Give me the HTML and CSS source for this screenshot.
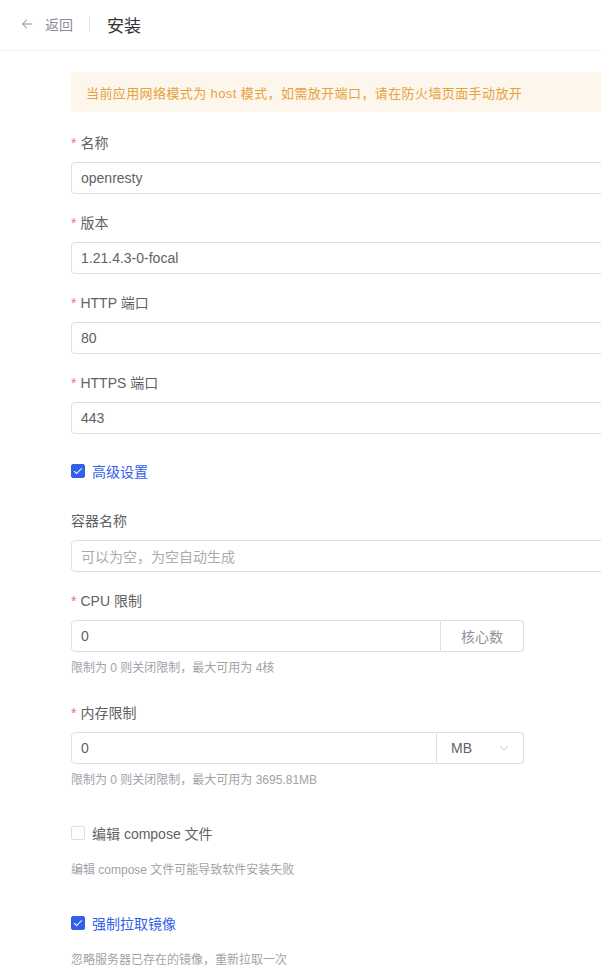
FILE: index.html
```html
<!DOCTYPE html>
<html lang="zh-CN">
<head>
    <meta charset="UTF-8">
    <meta name="viewport" content="width=device-width, initial-scale=1.0">
    <title>安装</title>
    <link rel="stylesheet" href="styles.css">
</head>
<body>
    <div class="page-header">
        <span class="back">
            <svg class="back-icon" viewBox="0 0 1024 1024" width="14" height="14">
                <path fill="currentColor" d="M224 480h640a32 32 0 1 1 0 64H224a32 32 0 0 1 0-64z"/>
                <path fill="currentColor" d="m237.248 512 265.408 265.344a32 32 0 0 1-45.312 45.312l-288-288a32 32 0 0 1 0-45.312l288-288a32 32 0 1 1 45.312 45.312L237.248 512z"/>
            </svg>
            返回
        </span>
        <span class="header-divider"></span>
        <span class="header-title">安装</span>
    </div>

    <div class="main">
        <div class="install-form">
            <div class="alert">当前应用网络模式为 host 模式，如需放开端口，请在防火墙页面手动放开</div>

            <div class="form-item">
                <label class="label required">名称</label>
                <div class="input"><span>openresty</span></div>
            </div>
            <div class="form-item">
                <label class="label required">版本</label>
                <div class="input"><span>1.21.4.3-0-focal</span></div>
            </div>
            <div class="form-item">
                <label class="label required">HTTP 端口</label>
                <div class="input"><span>80</span></div>
            </div>
            <div class="form-item">
                <label class="label required">HTTPS 端口</label>
                <div class="input"><span>443</span></div>
            </div>

            <div class="form-item">
                <label class="checkbox checked">
                    <span class="box"></span>
                    <span>高级设置</span>
                </label>
            </div>

            <div class="form-item">
                <label class="label">容器名称</label>
                <div class="input"><span class="placeholder">可以为空，为空自动生成</span></div>
            </div>
            <div class="form-item">
                <label class="label required">CPU 限制</label>
                <div class="input-group">
                    <div class="input"><span>0</span></div>
                    <div class="append">核心数</div>
                </div>
                <div class="help">限制为 0 则关闭限制，最大可用为 4核</div>
            </div>
            <div class="form-item">
                <label class="label required">内存限制</label>
                <div class="input-group">
                    <div class="input"><span>0</span></div>
                    <div class="unit-select">
                        <span>MB</span>
                        <svg class="arrow" viewBox="0 0 1024 1024" width="12" height="12">
                            <path fill="currentColor" d="M831.872 340.864 512 652.672 192.128 340.864a30.592 30.592 0 0 0-42.752 0 29.12 29.12 0 0 0 0 41.6L489.664 714.240a32 32 0 0 0 44.672 0l340.288-331.712a29.12 29.12 0 0 0 0-41.728 30.592 30.592 0 0 0-42.752 0z"/>
                        </svg>
                    </div>
                </div>
                <div class="help">限制为 0 则关闭限制，最大可用为 3695.81MB</div>
            </div>

            <div class="form-item">
                <label class="checkbox">
                    <span class="box"></span>
                    <span>编辑 compose 文件</span>
                </label>
                <div class="help">编辑 compose 文件可能导致软件安装失败</div>
            </div>
            <div class="form-item">
                <label class="checkbox checked">
                    <span class="box"></span>
                    <span>强制拉取镜像</span>
                </label>
                <div class="help">忽略服务器已存在的镜像，重新拉取一次</div>
            </div>
        </div>
    </div>
</body>
</html>
```

FILE: styles.css
```css
* { margin: 0; padding: 0; box-sizing: border-box; }
body {
    font-family: "Liberation Sans", "Noto Sans CJK SC", sans-serif;
    font-size: 14px;
    color: #606266;
    background: #fff;
    overflow: hidden;
}

/* top bar */
.page-header {
    height: 51px;
    display: flex;
    align-items: center;
    padding: 0 0 2px 20px;
    border-bottom: 1px solid #f0f1f4;
}
.back { display: flex; align-items: center; gap: 11px; color: #8a8d93; font-size: 14px; }
.back-icon { color: #8a8d93; }
.header-divider { width: 1px; height: 16px; background: #dcdfe6; margin: 0 17px 0 16px; }
.header-title { font-size: 17px; color: #303133; }

/* form */
.main { padding: 21px 0 0 71px; overflow: hidden; }
.install-form { width: 620px; }

.alert {
    height: 40px;
    display: flex;
    align-items: center;
    padding: 0 15px;
    background: #fdf6ec;
    color: #e6a23c;
    font-size: 13px;
    letter-spacing: 0.4px;
    border-radius: 4px;
    margin-bottom: 20px;
}

.form-item { margin-bottom: 18px; }
.label { display: block; line-height: 22px; margin-bottom: 8px; color: #606266; }
.label.required::before { content: "*"; color: #f56c6c; margin-right: 4px; }

.input {
    height: 32px;
    display: flex;
    align-items: center;
    padding: 0 9px;
    border: 1px solid #dcdfe6;
    border-radius: 4px;
    color: #606266;
    background: #fff;
}
.placeholder { color: #a8abb2; }

.input-group { display: flex; width: 453px; }
.input-group .input { flex: 1; border-radius: 4px 0 0 4px; }
.append {
    width: 83px;
    height: 32px;
    display: flex;
    align-items: center;
    justify-content: center;
    border: 1px solid #dcdfe6;
    border-left: none;
    border-radius: 0 4px 4px 0;
    color: #909399;
    background: #fff;
}
.unit-select {
    width: 87px;
    height: 32px;
    display: flex;
    align-items: center;
    justify-content: space-between;
    padding: 0 13px 0 14px;
    border: 1px solid #dcdfe6;
    border-left: none;
    border-radius: 0 4px 4px 0;
    color: #606266;
}
.arrow { color: #b8bbc2; }

.help { line-height: 32px; font-size: 12px; color: #a0a3a9; }

.checkbox { height: 40px; display: flex; align-items: center; gap: 7px; color: #606266; padding-bottom: 2px; }
.checkbox .box {
    width: 14px;
    height: 14px;
    border: 1px solid #dcdfe6;
    border-radius: 2px;
    background: #fff;
    position: relative;
}
.checkbox.checked { color: #3160ea; }
.checkbox.checked .box { background: #3160ea; border-color: #3160ea; }
.checkbox.checked .box::after {
    content: "";
    position: absolute;
    left: 4px;
    top: 1px;
    width: 3px;
    height: 7px;
    border: 1px solid #fff;
    border-left: 0;
    border-top: 0;
    transform: rotate(45deg);
}
```
